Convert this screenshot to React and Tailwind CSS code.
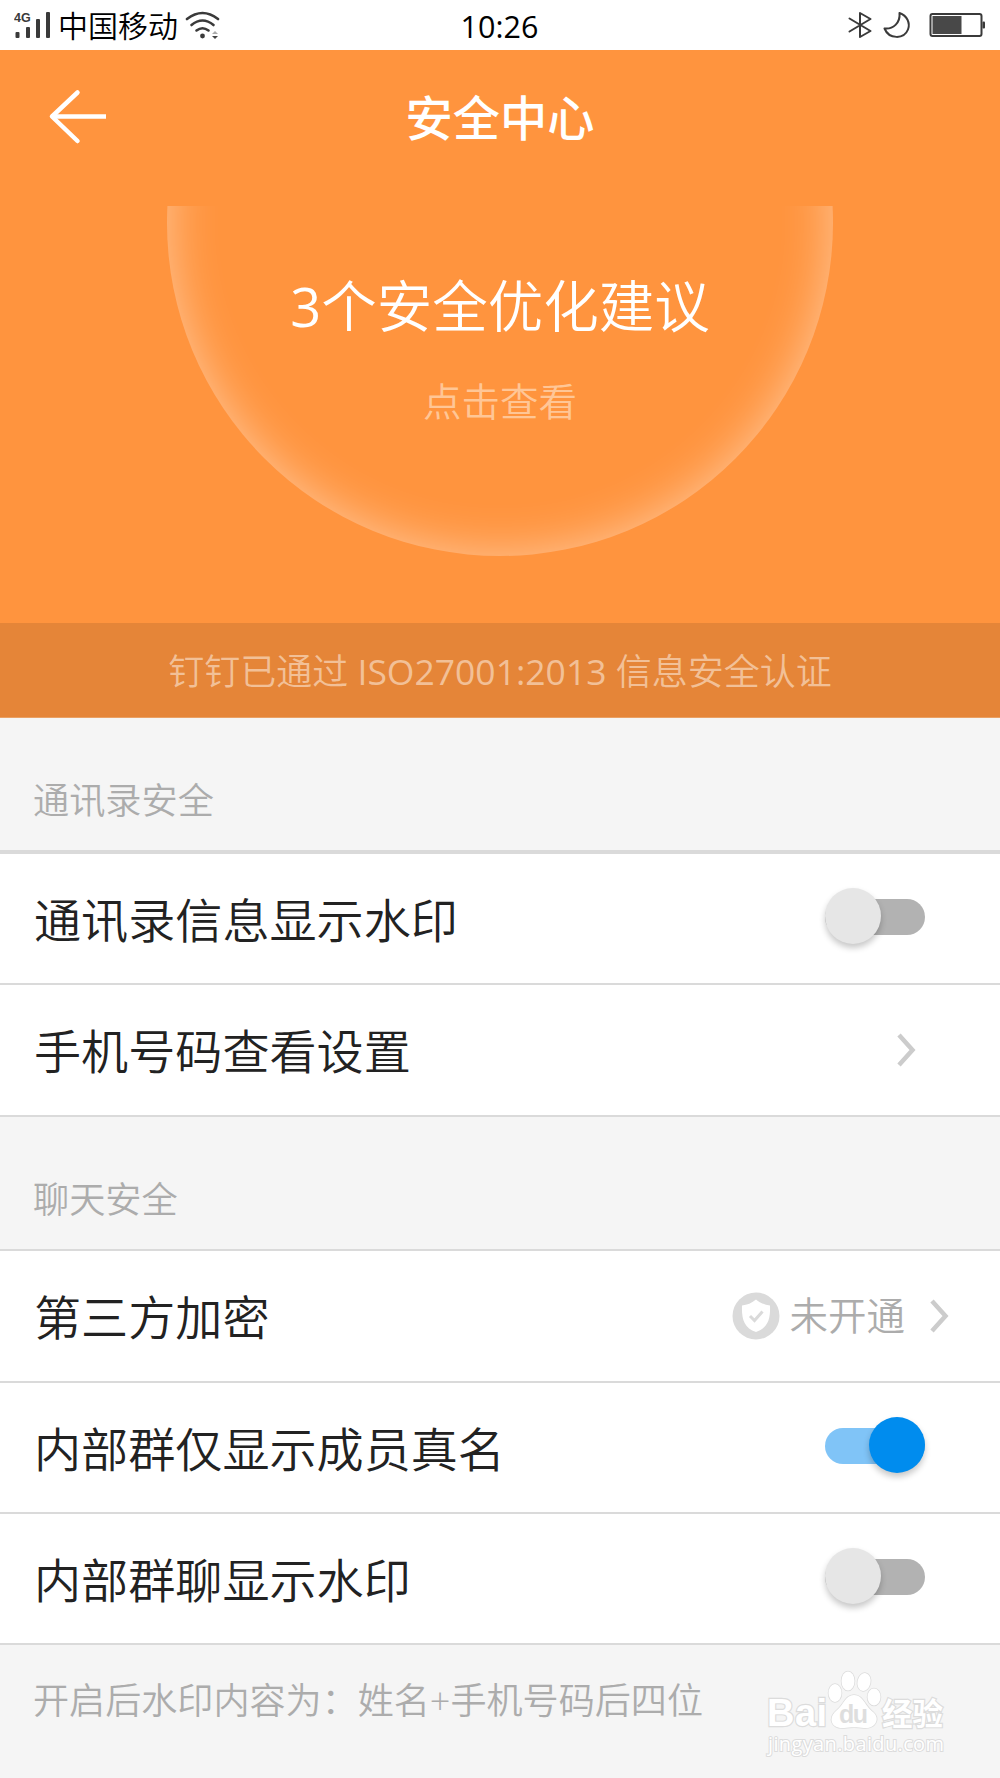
import React from 'react';

const StatusBar = () => (
  <div className="grid h-[50px] grid-cols-3 items-center bg-white pr-[15px] pl-[14px] text-black">
    <div className="flex items-center">
      {/* Signal strength */}
      <svg viewBox="0 0 38 30" className="h-[30px] w-[38px]" fill="#3a3a3a">
        <text x="0" y="12" fontSize="12.500" fontWeight="700" fontFamily="Liberation Sans, sans-serif">4G</text>
        <rect x="1.500" y="22" width="4" height="6" rx="1" />
        <rect x="12" y="17" width="4" height="11" rx="1" />
        <rect x="22" y="9" width="4" height="19" rx="1" />
        <rect x="32" y="2" width="4" height="26" rx="1" />
      </svg>
      <span className="ml-[6px] pt-[2px] text-[30px] leading-[44px] font-[350]">中国移动</span>
      {/* Wifi */}
      <svg viewBox="0 0 36 28" className="ml-[7px] h-[28px] w-[36px] shrink-0" fill="none" stroke="#3a3a3a" strokeWidth="2.6" strokeLinecap="round">
        <path d="M2 8 Q17.500 -4 33 8" />
        <path d="M6.500 14 Q17.500 5 28.500 14" />
        <path d="M11.500 19.500 Q17.500 15 23.500 19.500" />
        <circle cx="17.500" cy="25" r="2.400" fill="#3a3a3a" stroke="none" />
        <path d="M27 23 L30 20 L33 23 Z" fill="#aaa" stroke="none" />
        <path d="M27 25 L30 28 L33 25 Z" fill="#444" stroke="none" />
      </svg>
    </div>
    <span className="pt-[2px] text-center text-[30.500px] leading-[44px]">10:26</span>
    <div className="flex items-center justify-end">
      {/* Bluetooth */}
      <svg viewBox="0 0 24 28" className="h-[28px] w-[24px]" fill="none" stroke="#3a3a3a" strokeWidth="2" strokeLinejoin="round" strokeLinecap="round">
        <path d="M1.500 7.500 L22.500 20 L12 26 V2 L22.500 8 L1.500 20.500" />
      </svg>
      {/* Do not disturb */}
      <svg viewBox="0 0 28 28" className="ml-[11px] h-[28px] w-[28px]" fill="none" stroke="#3a3a3a" strokeWidth="2" strokeLinejoin="round">
        <path d="M16.500 2 C24 4.500 27.500 12 25 18.500 C21 28.500 6 28.500 1.500 17.500 C10 18.500 17.500 12 16.500 2 Z" />
      </svg>
      {/* Battery */}
      <svg viewBox="0 0 56 28" className="ml-[18px] h-[28px] w-[56px]">
        <rect x="1.500" y="3" width="51" height="22" rx="2" fill="#fff" stroke="#3a3a3a" strokeWidth="2" />
        <rect x="3.500" y="5" width="29" height="18" fill="#484848" />
        <rect x="53.500" y="10.500" width="2.500" height="7" rx="1" fill="#3a3a3a" />
      </svg>
    </div>
  </div>
);

const Hero = () => (
  <div className="flex h-[668px] flex-col bg-[#ff943e] text-white">
    <div className="grid h-[156px] grid-cols-3 items-start">
      <svg viewBox="0 0 60 60" className="mt-[37px] ml-[48px] h-[60px] w-[60px]" fill="none" stroke="#fff" strokeWidth="4.500" strokeLinecap="round">
        <path d="M29.500 5.500 L4 29.500 L29.500 54" strokeLinejoin="round" />
        <path d="M5 29.500 H58" strokeLinecap="butt" />
      </svg>
      <h1 className="mt-[38px] text-center text-[47.200px] leading-[60px] font-medium">安全中心</h1>
    </div>
    {/* Lower part of the glowing ring, cut off under the title */}
    <div className="flex h-[350px] justify-center overflow-hidden">
      <div className="-mt-[316px] flex h-[666px] w-[666px] shrink-0 flex-col self-start rounded-full pt-[380px] text-center shadow-[inset_0_0_50px_rgba(255,255,255,0.48)]">
        <div className="text-[55.500px] leading-[72px] font-[350]">
          <span className="text-[54px] font-normal">3</span>个安全优化建议
        </div>
        <div className="mt-[34px] text-[38.500px] leading-[50px] font-[350] text-[#ffc696]">点击查看</div>
      </div>
    </div>
    <div className="mt-auto flex h-[95px] items-center justify-center border-b border-[#eaa063] bg-[#e58538] text-[36px] font-[350] text-[#f2c097]">
      <span className="mt-[4px] whitespace-nowrap">
        钉钉已通过 <span className="text-[35.500px] font-normal">ISO27001:2013</span> 信息安全认证
      </span>
    </div>
  </div>
);

const SectionTitle = ({ children, className = 'border-b-2' }) => (
  <div className={`box-content h-[132px] border-[#dadada] px-[33px] ${className}`}>
    <div className="pt-[57px] text-[36.200px] leading-[50px] font-[350] text-[#acacac]">{children}</div>
  </div>
);

const Row = ({ label, children, className = '' }) => (
  <div className={`flex items-center justify-between border-b-2 border-[#dadada] bg-white pl-[34px] ${className}`}>
    <span className="pt-[2px] text-[47.100px] leading-[60px] font-[350] text-[#222]">{label}</span>
    {children}
  </div>
);

const Toggle = ({ on }) => (
  <div className="relative mr-[75px] mb-[5px] flex h-[56px] w-[100px] items-center">
    <div className={`mt-[2px] h-[36px] w-full rounded-full ${on ? 'bg-[#80c4f7]' : 'bg-[#b2b2b2]'}`} />
    <div
      className={`absolute top-0 h-[56px] w-[56px] rounded-full shadow-[0_4px_6px_rgba(0,0,0,0.22)] ${
        on ? 'right-0 bg-[#008cee]' : 'left-0 bg-[#e6e6e6]'
      }`}
    />
  </div>
);

const Chevron = ({ className }) => (
  <svg viewBox="0 0 19 36" className={`h-[36px] w-[19px] ${className}`} fill="none" stroke="#ccc" strokeWidth="4.500">
    <path d="M2 3 L15.500 18 L2 33" />
  </svg>
);

const ShieldIcon = () => (
  <svg viewBox="0 0 48 48" className="h-[48px] w-[48px]">
    <circle cx="24" cy="24" r="23.500" fill="#dadada" />
    <path d="M24 7.500 C28 11 33 13 38 13.500 C38.500 27 36 36 24 40 C12 36 9.500 27 10 13.500 C15 13 20 11 24 7.500 Z" fill="#fff" />
    <path d="M18 24 L22.500 28.500 L30.500 19.500" fill="none" stroke="#dadada" strokeWidth="3" />
  </svg>
);

const Watermark = () => (
  <div className="absolute top-[18px] left-[764px] h-[100px] w-[190px]">
    <svg viewBox="0 0 190 100" className="h-full w-full" fill="#fff" stroke="#dcdcdc" strokeWidth="2.400" paintOrder="stroke">
      <text x="3" y="63" fontSize="38" fontWeight="700" fontFamily="Liberation Sans, sans-serif" textLength="60">Bai</text>
      <g strokeWidth="1.500">
        <ellipse cx="71" cy="30" rx="6.500" ry="9" />
        <ellipse cx="84" cy="18" rx="6.500" ry="9.500" />
        <ellipse cx="100" cy="19" rx="6.500" ry="9" transform="rotate(12 100 19)" />
        <ellipse cx="110" cy="34" rx="6.500" ry="8.500" />
        <path d="M90 32 C99 32 101 43 109 49 C117 56 111 66 100 65 C94 64 86 64 80 65 C67 66 64 55 72 48 C80 42 81 32 90 32 Z" />
      </g>
      <text x="75" y="60" fontSize="25" fontWeight="700" fontFamily="Liberation Sans, sans-serif" fill="#dedede" stroke="none" textLength="29">du</text>
      <text x="118" y="62" fontSize="30.500" fontWeight="700" fontFamily="Noto Sans CJK SC, sans-serif">经验</text>
      <text x="4" y="88" fontSize="20" strokeWidth="2" fontFamily="Open Sans, sans-serif" textLength="176">jingyan.baidu.com</text>
    </svg>
  </div>
);

const App = () => {
  return (
    <div className="h-[1778px] w-[1000px] overflow-hidden bg-[#f5f5f5] font-['Open_Sans','Noto_Sans_CJK_SC',sans-serif]">
      <StatusBar />
      <Hero />

      <SectionTitle className="border-b-4">通讯录安全</SectionTitle>
      <Row label="通讯录信息显示水印" className="h-[131px]">
        <Toggle />
      </Row>
      <Row label="手机号码查看设置" className="h-[132px]">
        <Chevron className="mr-[84px]" />
      </Row>

      <SectionTitle>聊天安全</SectionTitle>
      <Row label="第三方加密" className="h-[132px]">
        <div className="mr-[51px] flex items-center">
          <ShieldIcon />
          <span className="mb-[2px] ml-[9px] text-[38.500px] leading-[50px] font-[350] text-[#acacac]">未开通</span>
          <Chevron className="ml-[25px]" />
        </div>
      </Row>
      <Row label="内部群仅显示成员真名" className="h-[131px]">
        <Toggle on />
      </Row>
      <Row label="内部群聊显示水印" className="h-[131px]">
        <Toggle />
      </Row>

      <div className="relative h-[133px] px-[33px] pt-[30px]">
        <p className="text-[36.100px] leading-[50px] font-[350] text-[#acacac]">开启后水印内容为：姓名+手机号码后四位</p>
        <Watermark />
      </div>
    </div>
  );
};

export default App;
